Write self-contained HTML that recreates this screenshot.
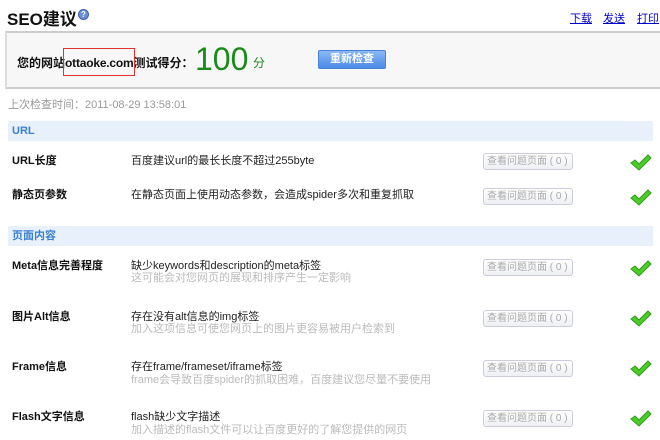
<!DOCTYPE html>
<html><head><meta charset="utf-8"><style>
*{margin:0;padding:0;box-sizing:border-box}
body{width:660px;height:440px;background:#fff;position:relative;overflow:hidden;font-family:"Liberation Sans","Noto Sans CJK SC",sans-serif;font-size:11px;color:#222}
.a{position:absolute;white-space:nowrap}
.t{font-size:17px;font-weight:bold;color:#111;left:7px;top:5px}
.lk{font-size:11px;color:#00c;text-decoration:underline;top:10px}
.box{left:5px;top:31px;width:660px;height:58px;background:#f7f7f7;border-top:2px solid #ccc;border-bottom:2px solid #ccc;border-left:2px solid #ddd}
.bar{left:8px;width:645px;height:20px;background:#e8f0fb;color:#3a7fd0;font-weight:bold;font-size:11px;line-height:20px;padding-left:4px}
.lab{left:12px;font-weight:bold;font-size:11px;color:#111}
.d{left:131px;font-size:11px;color:#222}
.s{left:131px;font-size:11px;color:#bbb}
.btn{left:483px;width:90px;height:17px;border:1px solid #ccd;border-radius:3px;background:linear-gradient(#fff,#eef0f4);color:#aaa;font-size:10px;line-height:15px;padding-left:3px;overflow:hidden}
.ck{left:630px}
</style></head><body>
<div class="a t">SEO建议</div>
<div class="a" style="left:78px;top:9px;width:11px;height:11px;border-radius:50%;background:#6b8fd6;border:1px solid #3a5fb0;color:#fff;font-size:8px;line-height:9px;text-align:center;font-weight:bold">?</div>
<div class="a lk" style="left:570px">下载</div>
<div class="a lk" style="left:603px">发送</div>
<div class="a lk" style="left:637px">打印</div>
<div class="a box"></div>
<div class="a" style="left:17px;top:54px;font-size:12px;font-weight:bold;color:#111">您的网站<span style="font-size:12px;letter-spacing:-0.2px">ottaoke.com</span>测试得分：</div>
<div class="a" style="left:63px;top:48px;width:72px;height:28px;border:1px solid #e03030"></div>
<div class="a" style="left:195px;top:41px;font-size:32px;color:#1a8a1a">100</div>
<div class="a" style="left:253px;top:54px;font-size:12px;color:#1a8a1a">分</div>
<div class="a" style="left:318px;top:50px;width:68px;height:19px;border-radius:2px;background:linear-gradient(#8ab8f4,#4b8ae6);border:1px solid #4a82d8;color:#fff;font-weight:bold;font-size:11px;line-height:17px;text-align:center">重新检查</div>
<div class="a" style="left:8px;top:96px;color:#999;font-size:11px">上次检查时间：2011-08-29 13:58:01</div>
<div class="a bar" style="top:121px">URL</div>
<div class="a bar" style="top:226px">页面内容</div>

<div class="a lab" style="top:152px">URL长度</div>
<div class="a d" style="top:152px">百度建议url的最长长度不超过255byte</div>
<div class="a lab" style="top:186px">静态页参数</div>
<div class="a d" style="top:186px">在静态页面上使用动态参数，会造成spider多次和重复抓取</div>

<div class="a lab" style="top:257px">Meta信息完善程度</div>
<div class="a d" style="top:257px">缺少keywords和description的meta标签</div>
<div class="a s" style="top:269px">这可能会对您网页的展现和排序产生一定影响</div>
<div class="a lab" style="top:308px">图片Alt信息</div>
<div class="a d" style="top:308px">存在没有alt信息的img标签</div>
<div class="a s" style="top:320px">加入这项信息可使您网页上的图片更容易被用户检索到</div>
<div class="a lab" style="top:358px">Frame信息</div>
<div class="a d" style="top:358px">存在frame/frameset/iframe标签</div>
<div class="a s" style="top:371px">frame会导致百度spider的抓取困难，百度建议您尽量不要使用</div>
<div class="a lab" style="top:408px">Flash文字信息</div>
<div class="a d" style="top:408px">flash缺少文字描述</div>
<div class="a s" style="top:421px">加入描述的flash文件可以让百度更好的了解您提供的网页</div>

<div class="a btn" style="top:153px">查看问题页面 ( 0 )</div>
<div class="a btn" style="top:188px">查看问题页面 ( 0 )</div>
<div class="a btn" style="top:259px">查看问题页面 ( 0 )</div>
<div class="a btn" style="top:310px">查看问题页面 ( 0 )</div>
<div class="a btn" style="top:360px">查看问题页面 ( 0 )</div>
<div class="a btn" style="top:410px">查看问题页面 ( 0 )</div>

<svg class="a ck" style="top:154px" width="22" height="18" viewBox="0 0 22 18"><path d="M1 9 L5 6 L9 10 L18 1 L21 4 L9 16 Z" fill="#4ccc2a" stroke="#2e9a14" stroke-width="1"/></svg>
<svg class="a ck" style="top:189px" width="22" height="18" viewBox="0 0 22 18"><path d="M1 9 L5 6 L9 10 L18 1 L21 4 L9 16 Z" fill="#4ccc2a" stroke="#2e9a14" stroke-width="1"/></svg>
<svg class="a ck" style="top:260px" width="22" height="18" viewBox="0 0 22 18"><path d="M1 9 L5 6 L9 10 L18 1 L21 4 L9 16 Z" fill="#4ccc2a" stroke="#2e9a14" stroke-width="1"/></svg>
<svg class="a ck" style="top:310px" width="22" height="18" viewBox="0 0 22 18"><path d="M1 9 L5 6 L9 10 L18 1 L21 4 L9 16 Z" fill="#4ccc2a" stroke="#2e9a14" stroke-width="1"/></svg>
<svg class="a ck" style="top:360px" width="22" height="18" viewBox="0 0 22 18"><path d="M1 9 L5 6 L9 10 L18 1 L21 4 L9 16 Z" fill="#4ccc2a" stroke="#2e9a14" stroke-width="1"/></svg>
<svg class="a ck" style="top:410px" width="22" height="18" viewBox="0 0 22 18"><path d="M1 9 L5 6 L9 10 L18 1 L21 4 L9 16 Z" fill="#4ccc2a" stroke="#2e9a14" stroke-width="1"/></svg>
</body></html>
